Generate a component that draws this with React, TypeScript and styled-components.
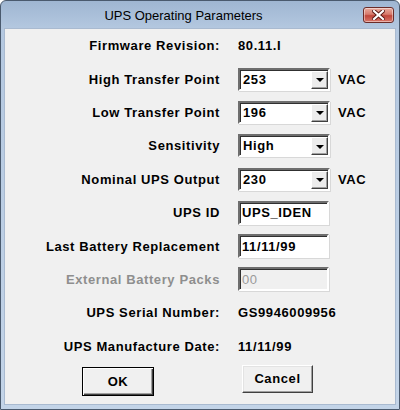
import React from 'react';
import styled, { createGlobalStyle } from 'styled-components';

const GlobalStyle = createGlobalStyle`
  html, body {
    margin: 0;
    padding: 0;
    background: #ffffff;
  }
`;

interface Field {
  label: string;
  kind: 'text' | 'combo' | 'input';
  value: string;
  unit?: string;
  disabled?: boolean;
}

const fields: Field[] = [
  { label: 'Firmware Revision:', kind: 'text', value: '80.11.I' },
  { label: 'High Transfer Point', kind: 'combo', value: '253', unit: 'VAC' },
  { label: 'Low Transfer Point', kind: 'combo', value: '196', unit: 'VAC' },
  { label: 'Sensitivity', kind: 'combo', value: 'High' },
  { label: 'Nominal UPS Output', kind: 'combo', value: '230', unit: 'VAC' },
  { label: 'UPS ID', kind: 'input', value: 'UPS_IDEN' },
  { label: 'Last Battery Replacement', kind: 'input', value: '11/11/99' },
  { label: 'External Battery Packs', kind: 'input', value: '00', disabled: true },
  { label: 'UPS Serial Number:', kind: 'text', value: 'GS9946009956' },
  { label: 'UPS Manufacture Date:', kind: 'text', value: '11/11/99' },
];

const App: React.FC = () => {
  return (
    <>
      <GlobalStyle />
      <Window>
        <TitleBar>
          <Title>UPS Operating Parameters</Title>
          <CloseButton aria-label="Close">
            <CloseIcon />
          </CloseButton>
        </TitleBar>
        <Client>
          <Form>
            {fields.map((f) => (
              <React.Fragment key={f.label}>
                <Label $disabled={f.disabled}>{f.label}</Label>
                <ControlCell>
                  {f.kind === 'text' && <Value>{f.value}</Value>}
                  {f.kind === 'combo' && (
                    <Combo>
                      <ComboText>{f.value}</ComboText>
                      <DropButton>
                        <Arrow />
                      </DropButton>
                    </Combo>
                  )}
                  {f.kind === 'input' && (
                    <TextBox $disabled={f.disabled}>{f.value}</TextBox>
                  )}
                  {f.unit && <Unit>{f.unit}</Unit>}
                </ControlCell>
              </React.Fragment>
            ))}
          </Form>
          <ButtonRow>
            <PushButton $default>OK</PushButton>
            <PushButton>Cancel</PushButton>
          </ButtonRow>
        </Client>
      </Window>
    </>
  );
};

// Styled Components
const Window = styled.div`
  box-sizing: border-box;
  width: 400px;
  height: 410px;
  display: flex;
  flex-direction: column;
  border: 1px solid #4a5a6e;
  border-radius: 6px 6px 0 0;
  background: linear-gradient(to bottom, #9fb6d2 0px, #b4c8e0 28px, #c3d4e8 100%);
  padding: 0 3px 4px;
  overflow: hidden;
`;

const TitleBar = styled.div`
  height: 27px;
  display: flex;
  align-items: center;
  padding-right: 2px;
`;

const Title = styled.div`
  flex: 1;
  text-align: center;
  font-family: 'Liberation Sans', Arial, sans-serif;
  font-size: 13px;
  color: #000;
  padding-top: 2px;
`;

const CloseButton = styled.div`
  box-sizing: border-box;
  width: 31px;
  height: 16px;
  margin-top: 1px;
  border: 1px solid #6b2c28;
  border-radius: 3px;
  background: linear-gradient(to bottom, #e9ac9f 0%, #d77a6c 45%, #c0463b 55%, #d9776a 100%);
  box-shadow: inset 0 0 0 1px rgba(255, 255, 255, 0.45);
  display: flex;
  align-items: center;
  justify-content: center;
`;

const Client = styled.div`
  flex: 1;
  display: flex;
  flex-direction: column;
  background: #f0f0f0;
  border: 1px solid #a9bad0;
  font-family: 'Liberation Sans', Arial, sans-serif;
  font-size: 13px;
  font-weight: bold;
  letter-spacing: 0.6px;
  color: #000;
`;

const Form = styled.div`
  display: grid;
  grid-template-columns: 215px 1fr;
  grid-auto-rows: 33.4px;
  column-gap: 18px;
  align-items: center;
`;

const Label = styled.div<{ $disabled?: boolean }>`
  text-align: right;
  white-space: nowrap;
  color: ${({ $disabled }) => ($disabled ? '#8e8e8e' : '#000')};
`;

const ControlCell = styled.div`
  display: flex;
  align-items: center;
  gap: 8px;
`;

const Value = styled.span`
  white-space: nowrap;
`;

const Unit = styled.span`
  white-space: nowrap;
`;

const Combo = styled.div`
  box-sizing: border-box;
  width: 92px;
  height: 23px;
  display: flex;
  align-items: stretch;
  background: #fff;
  border-style: solid;
  border-width: 2px;
  border-color: #6e6e6e #ffffff #ffffff #6e6e6e;
  box-shadow: inset 1px 1px 0 #303030, 1px 1px 0 #d8d8d8;
`;

const ComboText = styled.div`
  flex: 1;
  display: flex;
  align-items: center;
  padding-left: 3px;
`;

const DropButton = styled.div`
  box-sizing: border-box;
  width: 17px;
  margin: 1px 0 0;
  display: flex;
  align-items: center;
  justify-content: center;
  background: #ececec;
  border-style: solid;
  border-width: 1px;
  border-color: #ffffff #404040 #404040 #ffffff;
  box-shadow: inset -1px -1px 0 #a0a0a0;
`;

const Arrow = styled.span`
  width: 0;
  height: 0;
  border-left: 4px solid transparent;
  border-right: 4px solid transparent;
  border-top: 4px solid #000;
  margin-top: 1px;
`;

const TextBox = styled.div<{ $disabled?: boolean }>`
  box-sizing: border-box;
  width: 91px;
  height: 24px;
  display: flex;
  align-items: center;
  padding-left: 2px;
  background: ${({ $disabled }) => ($disabled ? '#f0f0f0' : '#ffffff')};
  color: ${({ $disabled }) => ($disabled ? '#9a9a9a' : '#000')};
  font-weight: ${({ $disabled }) => ($disabled ? 'normal' : 'bold')};
  border-style: solid;
  border-width: 2px;
  border-color: #6e6e6e #ffffff #ffffff #6e6e6e;
  box-shadow: inset 1px 1px 0 #303030, 1px 1px 0 #d8d8d8;
`;

const ButtonRow = styled.div`
  display: flex;
  align-items: flex-start;
  gap: 88px;
  padding-left: 77px;
  margin-top: 2px;
`;

const PushButton = styled.div<{ $default?: boolean }>`
  box-sizing: border-box;
  width: ${({ $default }) => ($default ? '72px' : '71px')};
  height: ${({ $default }) => ($default ? '29px' : '28px')};
  margin-top: ${({ $default }) => ($default ? '2px' : '0')};
  display: flex;
  align-items: center;
  justify-content: center;
  background: #f0f0f0;
  border-style: solid;
  border-width: 1px;
  border-color: ${({ $default }) =>
    $default ? '#000 #000 #000 #000' : '#ffffff #404040 #404040 #ffffff'};
  box-shadow: ${({ $default }) =>
    $default
      ? 'inset 1px 1px 0 #ffffff, inset -1px -1px 0 #404040, inset -2px -2px 0 #a0a0a0'
      : 'inset -1px -1px 0 #a0a0a0, inset 1px 1px 0 #e3e3e3'};
  letter-spacing: 0.6px;
`;

// Icons
const CloseIcon = () => (
  <svg width="13" height="10" viewBox="0 0 13 10">
    <path
      d="M2 1 L11 9 M11 1 L2 9"
      stroke="#5a1a16"
      strokeWidth="4"
      strokeLinecap="square"
    />
    <path
      d="M2 1 L11 9 M11 1 L2 9"
      stroke="#ffffff"
      strokeWidth="2.2"
      strokeLinecap="square"
    />
  </svg>
);

export default App;
